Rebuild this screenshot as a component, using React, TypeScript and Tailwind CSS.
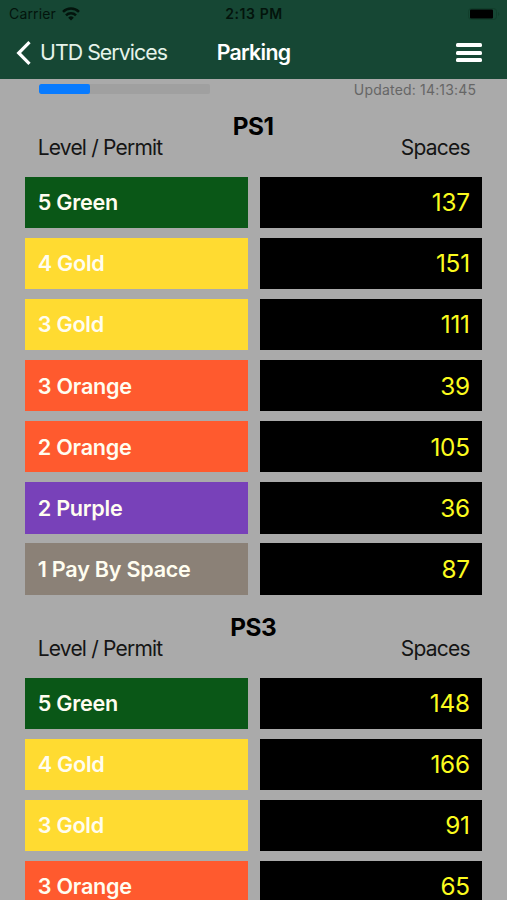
type Row = { label: string; color: string; spaces: number };
type Structure = { name: string; rows: Row[] };

const GREEN = 'bg-[#0a5717]';
const GOLD = 'bg-[#ffdb31]';
const ORANGE = 'bg-[#ff5a2e]';
const PURPLE = 'bg-[#7841b9]';
const GRAY = 'bg-[#8b8177]';

const structures: Structure[] = [
  {
    name: 'PS1',
    rows: [
      { label: '5 Green', color: GREEN, spaces: 137 },
      { label: '4 Gold', color: GOLD, spaces: 151 },
      { label: '3 Gold', color: GOLD, spaces: 111 },
      { label: '3 Orange', color: ORANGE, spaces: 39 },
      { label: '2 Orange', color: ORANGE, spaces: 105 },
      { label: '2 Purple', color: PURPLE, spaces: 36 },
      { label: '1 Pay By Space', color: GRAY, spaces: 87 },
    ],
  },
  {
    name: 'PS3',
    rows: [
      { label: '5 Green', color: GREEN, spaces: 148 },
      { label: '4 Gold', color: GOLD, spaces: 166 },
      { label: '3 Gold', color: GOLD, spaces: 91 },
      { label: '3 Orange', color: ORANGE, spaces: 65 },
    ],
  },
];

function StatusBar() {
  return (
    <div className="grid h-[27px] grid-cols-[1fr_auto_1fr] items-center pr-[5px] pl-[9px] text-[14px] leading-none text-[#03140c]">
      <div className="flex items-center gap-[6px]">
        <span className="tracking-[0.15px]">Carrier</span>
        <svg width="18" height="14" viewBox="0 0 18 14" fill="none" stroke="currentColor" strokeWidth="2.5">
          <path d="M1 4.9a11.4 11.4 0 0 1 16 0" />
          <path d="M4 8.3a7.1 7.1 0 0 1 10 0" />
          <path d="M9 13.5 6.2 10.7a4 4 0 0 1 5.6 0Z" fill="currentColor" stroke="none" />
        </svg>
      </div>
      <span className="mr-[3px] text-center font-semibold tracking-[0.6px]">2:13 PM</span>
      <svg className="justify-self-end" width="34" height="12" viewBox="0 0 34 12">
        <rect x="0.5" y="0.5" width="28" height="11" rx="3" fill="none" stroke="#113e2b" />
        <rect x="2" y="1.5" width="23" height="9" rx="1" fill="#000" />
        <path d="M30 4v4a2.2 2.2 0 0 0 0-4Z" fill="#113e2b" />
      </svg>
    </div>
  );
}

function NavBar() {
  return (
    <div className="grid h-[51px] grid-cols-[1fr_auto_1fr] items-center px-[16px] text-[21.3px] leading-none text-white">
      <div className="flex items-center gap-[9px]">
        <svg width="15" height="24" viewBox="0 0 15 24" fill="none" stroke="currentColor" strokeWidth="3.2">
          <path d="M13.5 1.2 2.7 12l10.8 10.8" />
        </svg>
        <span className="tracking-[-0.95px] whitespace-nowrap text-[#e6f3ea]">UTD Services</span>
      </div>
      <span className="font-semibold tracking-[-0.7px]">Parking</span>
      <div className="mr-[9px] flex w-[26px] flex-col gap-[3.4px] justify-self-end">
        <span className="h-[4px] rounded-[1.5px] bg-white" />
        <span className="h-[4px] rounded-[1.5px] bg-white" />
        <span className="h-[4px] rounded-[1.5px] bg-white" />
      </div>
    </div>
  );
}

function Section({ data }: { data: Structure }) {
  return (
    <section className="flex flex-col">
      <h2 className="pr-[1px] text-center text-[24.3px] leading-[30px] font-bold tracking-[-0.4px] text-black">{data.name}</h2>
      <div className="-mt-[4.6px] flex h-[40.6px] justify-between px-[12.5px] text-[21px] leading-[24px] text-[#151515]">
        <span className="tracking-[-0.8px]">Level / Permit</span>
        <span className="tracking-[-0.8px]">Spaces</span>
      </div>
      <div className="flex flex-col gap-[9.8px]">
        {data.rows.map((row) => (
          <div key={row.label} className="grid h-[51.3px] grid-cols-2 gap-[12px]">
            <div className={`flex items-center pl-[12.6px] text-[21.6px] font-semibold tracking-[-0.25px] text-[#fffdf0] ${row.color}`}>
              {row.label}
            </div>
            <div className="flex items-center justify-end bg-black pr-[12.4px] text-[24.3px] tracking-[-0.2px] text-[#fbfb1e]">
              {row.spaces}
            </div>
          </div>
        ))}
      </div>
    </section>
  );
}

export default function App() {
  return (
    <div className="flex h-[900px] w-[507px] flex-col overflow-hidden bg-[#aaaaaa] font-['Inter',sans-serif]">
      <header className="h-[79px] shrink-0 bg-[#164734]">
        <StatusBar />
        <NavBar />
      </header>
      <main className="flex flex-col pr-[24.8px] pl-[25.2px]">
        <div className="flex h-[31.8px] items-start justify-between pt-[5px] pr-[6px] pl-[13.8px]">
          <div className="h-[10px] w-[171px] overflow-hidden rounded-[2px] bg-[#a0a0a0]">
            <div className="h-full w-[51px] rounded-[2px] bg-[#087bff]" />
          </div>
          <span className="text-[14px] leading-[11px] tracking-[0.18px] text-[#666]">Updated: 14:13:45</span>
        </div>
        <div className="flex flex-col gap-[16.9px]">
          {structures.map((s) => (
            <Section key={s.name} data={s} />
          ))}
        </div>
      </main>
    </div>
  );
}
